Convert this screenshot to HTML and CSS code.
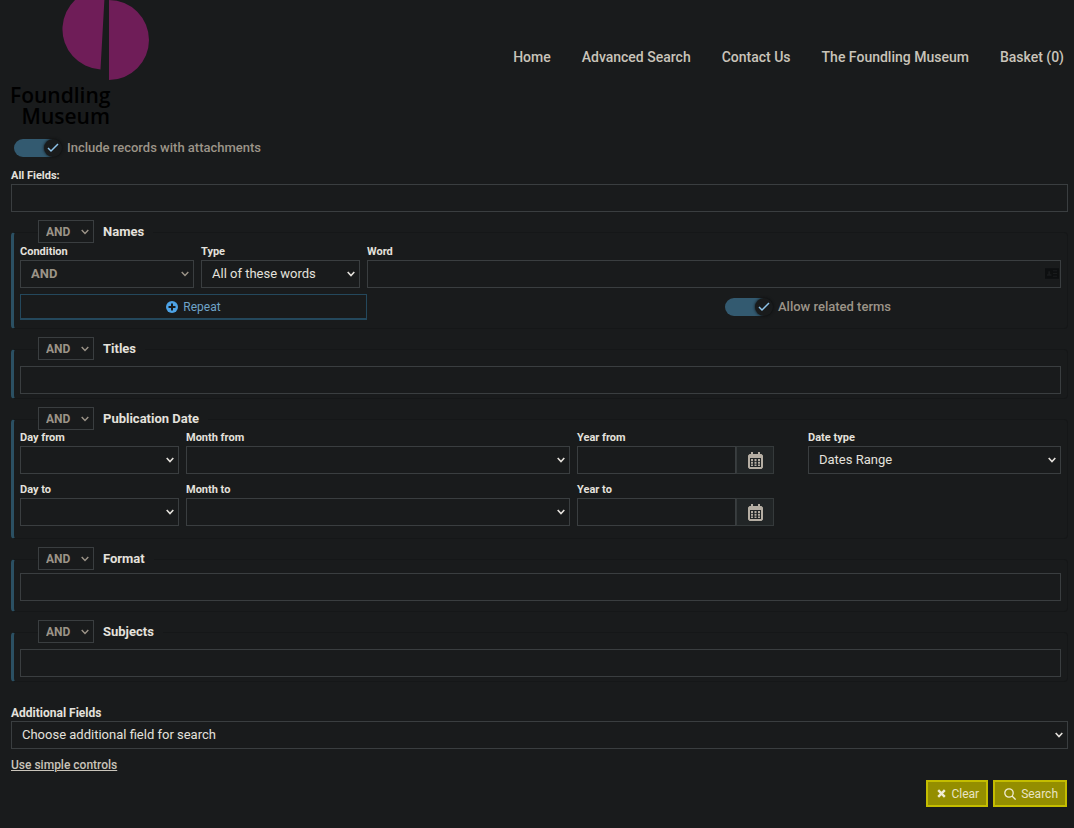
FILE: index.html
```html
<!DOCTYPE html>
<html lang="en">
<head>
<meta charset="utf-8">
<title>Foundling Museum - Advanced Search</title>
<link rel="stylesheet" href="styles.css">
</head>
<body>
<header class="header">
  <a class="logo" href="#">
    <svg class="logo-mark" viewBox="0 0 140 80" aria-hidden="true"><path d="M95-11 90.500 69.500A40.300 40.300 0 0 1 95-11ZM99 0a40 40 0 0 1 0 80Z"/></svg>
    <span class="logo-text">Foundling<br>Museum</span>
  </a>
  <nav class="nav">
    <a href="#">Home</a>
    <a href="#">Advanced Search</a>
    <a href="#">Contact Us</a>
    <a href="#">The Foundling Museum</a>
    <a href="#">Basket (0)</a>
  </nav>
</header>
<main>
<form class="search">
  <label class="toggle toggle-top"><input type="checkbox" checked><span class="track"><span class="knob"><svg viewBox="0 0 12 10"><path d="M1 5l3 3 7-7"/></svg></span></span>Include records with attachments</label>

  <div class="field all-fields"><label for="all">All Fields:</label><input id="all" type="text"></div>

  <fieldset class="group">
    <legend><select class="op" aria-label="Names operator" disabled><option>AND</option></select>Names</legend>
    <div class="names">
      <div class="field"><label for="cond">Condition</label><select id="cond" disabled><option>AND</option></select></div>
      <div class="field"><label for="type">Type</label><select id="type"><option>All of these words</option></select></div>
      <div class="field word"><label for="word">Word</label><input id="word" type="text">
        <svg class="card" viewBox="0 0 15 11" aria-hidden="true"><path fill-rule="evenodd" d="M0 0h15v11H0ZM2 8h5V6.500L5.500 6V3h-2v3L2 6.500ZM8.500 2v1H13V2ZM8.500 5v1H13V5ZM8.500 8v1H13V8Z"/></svg>
      </div>
    </div>
    <div class="names-actions">
      <button class="repeat" type="button"><svg viewBox="0 0 12 12" aria-hidden="true"><circle cx="6" cy="6" r="6"/><path d="M6 2.500v7M2.500 6h7"/></svg>Repeat</button>
      <label class="toggle"><input type="checkbox" checked><span class="track"><span class="knob"><svg viewBox="0 0 12 10"><path d="M1 5l3 3 7-7"/></svg></span></span>Allow related terms</label>
    </div>
  </fieldset>

  <fieldset class="group spaced">
    <legend><select class="op" aria-label="Titles operator" disabled><option>AND</option></select>Titles</legend>
    <input type="text" aria-label="Titles">
  </fieldset>

  <fieldset class="group dates-group">
    <legend><select class="op" aria-label="Publication date operator" disabled><option>AND</option></select>Publication Date</legend>
    <div class="dates">
      <div class="field"><label for="df">Day from</label><select id="df"><option></option></select></div>
      <div class="field"><label for="mf">Month from</label><select id="mf"><option></option></select></div>
      <div class="field"><label for="yf">Year from</label>
        <div class="year"><input id="yf" type="text"><button type="button" aria-label="Pick start date"><svg viewBox="0 0 15 17"><path fill-rule="evenodd" d="M3 0h2v2h5V0h2v2h1.500L15 3.500V15.500L13.500 17h-12L0 15.500v-12L1.500 2H3ZM2 6v9h11V6Z"/><path d="M3 7h2v2H3zM6.500 7h2v2h-2zM10 7h2v2h-2zM3 9.700h2v2H3zM6.500 9.700h2v2h-2zM10 9.700h2v2h-2zM3 12.400h2v1.600H3zM6.500 12.400h2v1.600h-2zM10 12.400h2v1.600h-2z"/></svg></button></div>
      </div>
      <div class="field date-type"><label for="dt">Date type</label><select id="dt"><option>Dates Range</option></select></div>
      <div class="field"><label for="d2">Day to</label><select id="d2"><option></option></select></div>
      <div class="field"><label for="m2">Month to</label><select id="m2"><option></option></select></div>
      <div class="field"><label for="y2">Year to</label>
        <div class="year"><input id="y2" type="text"><button type="button" aria-label="Pick end date"><svg viewBox="0 0 15 17"><path fill-rule="evenodd" d="M3 0h2v2h5V0h2v2h1.500L15 3.500V15.500L13.500 17h-12L0 15.500v-12L1.500 2H3ZM2 6v9h11V6Z"/><path d="M3 7h2v2H3zM6.500 7h2v2h-2zM10 7h2v2h-2zM3 9.700h2v2H3zM6.500 9.700h2v2h-2zM10 9.700h2v2h-2zM3 12.400h2v1.600H3zM6.500 12.400h2v1.600h-2zM10 12.400h2v1.600h-2z"/></svg></button></div>
      </div>
    </div>
  </fieldset>

  <fieldset class="group format-group">
    <legend><select class="op" aria-label="Format operator" disabled><option>AND</option></select>Format</legend>
    <input type="text" aria-label="Format">
  </fieldset>

  <fieldset class="group spaced">
    <legend><select class="op" aria-label="Subjects operator" disabled><option>AND</option></select>Subjects</legend>
    <input type="text" aria-label="Subjects">
  </fieldset>

  <div class="field additional"><label for="add">Additional Fields</label><select id="add"><option>Choose additional field for search</option></select></div>
  <a class="simple" href="#">Use simple controls</a>
  <div class="actions">
    <button type="reset"><svg class="x" viewBox="0 0 9 9" aria-hidden="true"><path d="M1.200 1.200l6.600 6.600M7.800 1.200l-6.600 6.600"/></svg>Clear</button>
    <button type="submit"><svg class="lens" viewBox="0 0 12 12" aria-hidden="true"><circle cx="5" cy="5" r="4.200"/><path d="M8 8l3.600 3.600"/></svg>Search</button>
  </div>
</form>
</main>
</body>
</html>
```
FILE: styles.css
```css
* { box-sizing: border-box; }
body {
  margin: 0;
  background: #191b1c;
  color: #e4e1dc;
  font-family: Roboto, "Liberation Sans", sans-serif;
  font-size: 13px;
  line-height: 16px;
}
input, select, button { font: inherit; color: inherit; margin: 0; border-radius: 0; }

.header {
  display: flex;
  justify-content: space-between;
  padding: 0 10px;
}
.logo { display: block; color: #000; text-decoration: none; }
.logo-mark { display: block; width: 140px; height: 80px; margin-bottom: 5px; overflow: hidden; }
.logo-mark path { fill: #6f1d58; }
.logo-text {
  display: block;
  width: 100px;
  text-align: right;
  font: 600 21px/21px "Open Sans", sans-serif;
}
.nav { display: flex; gap: 31px; padding-top: 49px; }
.nav a { color: #c9c4ba; font-size: 14px; font-weight: 500; text-decoration: none; }

.search { padding: 11px 6px 22px 11px; }
.toggle {
  display: flex;
  align-items: center;
  gap: 5px;
  color: #9c9488;
  font-weight: 500;
}
.toggle-top { padding-left: 3px; height: 20px; }
.toggle input { position: absolute; opacity: 0; }
.track {
  width: 48px;
  height: 18px;
  border-radius: 9px;
  background: linear-gradient(to right, #335a70 38px, #191b1c 38px);
  display: flex;
  justify-content: flex-end;
}
.knob {
  display: flex;
  align-items: center;
  justify-content: center;
  width: 18px;
  height: 18px;
  border-radius: 50%;
  background: #191b1c;
  box-shadow: 0 0 3px #0b0c0d;
}
.knob svg { width: 12px; height: 10px; fill: none; stroke: #8fc4ea; stroke-width: 1.500; }

.field label { display: block; height: 14px; font-size: 11px; line-height: 12px; font-weight: 700; }
.field, .year { min-width: 0; }
input[type="text"], .field select {
  display: block;
  width: 100%;
  height: 28px;
  border: 1px solid #3a3e40;
  background-color: #191b1c;
  padding: 0 10px;
}
select {
  appearance: none;
  background: #191b1c url("data:image/svg+xml,%3Csvg xmlns='http://www.w3.org/2000/svg' width='8' height='6'%3E%3Cpath d='M.7 1 4 4.500 7.300 1' fill='none' stroke='%23e4e1dc' stroke-width='1.600'/%3E%3C/svg%3E") no-repeat right 4px center;
}
select:disabled {
  opacity: 1;
  color: #9c9488;
  background-image: url("data:image/svg+xml,%3Csvg xmlns='http://www.w3.org/2000/svg' width='8' height='6'%3E%3Cpath d='M.7 1 4 4.500 7.300 1' fill='none' stroke='%239c9488' stroke-width='1.400'/%3E%3C/svg%3E");
}
.field select:disabled { font-weight: 700; }
.all-fields { margin-top: 12px; }

.group {
  min-width: 0;
  margin: 8px 0 0;
  padding: 0 6px 8px;
  border: 1px solid #151718;
  border-left: 3px solid #2b5063;
  border-radius: 4px;
}
.group legend {
  display: flex;
  align-items: center;
  gap: 9px;
  height: 25px;
  padding: 0 9px 2px 0;
  margin-left: 18px;
  font-weight: 700;
  color: #e4e1dc;
}
.op {
  width: 56px;
  height: 23px;
  border: 1px solid #3a3e40;
  padding: 0 0 0 7px;
  font-size: 12px;
  font-weight: 700;
}
.names { display: grid; grid-template-columns: 174fr 159fr 694fr; gap: 7px; padding-top: 1px; }
.word { position: relative; }
.card { position: absolute; right: 2px; bottom: 9px; width: 14px; height: 11px; fill: #0d0f10; }
.names-actions {
  display: grid;
  grid-template-columns: 347fr 358fr 336fr;
  align-items: center;
  margin-top: 6px;
}
.names-actions .toggle { grid-column: 3; }
.repeat {
  display: flex;
  align-items: center;
  justify-content: center;
  gap: 5px;
  height: 26px;
  border: 1px solid #24485c;
  border-bottom-width: 2px;
  background: #191b1c;
  color: #6fa3c8;
  font-size: 12px;
}
.repeat svg { width: 12px; height: 12px; fill: #4da3e6; stroke: #191b1c; stroke-width: 2; }
.repeat circle { stroke: none; }

.spaced { padding: 4px 6px; }
.dates-group { padding-bottom: 12px; }
.format-group { padding-top: 1px; padding-bottom: 10px; }
.dates {
  display: grid;
  grid-template-columns: 159fr 384fr 197fr 280fr;
  gap: 10px 7px;
}
.date-type { padding-left: 27px; }
.year { display: flex; }
.year button {
  display: flex;
  flex: none;
  align-items: center;
  justify-content: center;
  width: 38px;
  height: 28px;
  border: 1px solid #353a3b;
  background: #212526;
  padding: 0;
}
.year svg { width: 15px; height: 17px; fill: #b5aea3; }

.additional { margin-top: 25px; }
.additional label { font-size: 12px; }
.simple { display: block; width: max-content; margin-top: 8px; color: #c9c4ba; font-size: 12px; font-weight: 500; }
.actions { display: flex; justify-content: flex-end; gap: 5px; margin-top: 7px; padding-right: 1px; }
.actions button {
  display: flex;
  align-items: center;
  gap: 5px;
  height: 27px;
  padding: 0 7px 0 9px;
  border: 2px solid #c4bd00;
  background: #948e00;
  font-size: 12px;
  color: #e9e4c4;
}
.actions svg { fill: none; stroke: #f0ecd2; }
.x { width: 9px; height: 9px; stroke-width: 2.400; }
.lens { width: 12px; height: 12px; stroke-width: 1.300; }
```
